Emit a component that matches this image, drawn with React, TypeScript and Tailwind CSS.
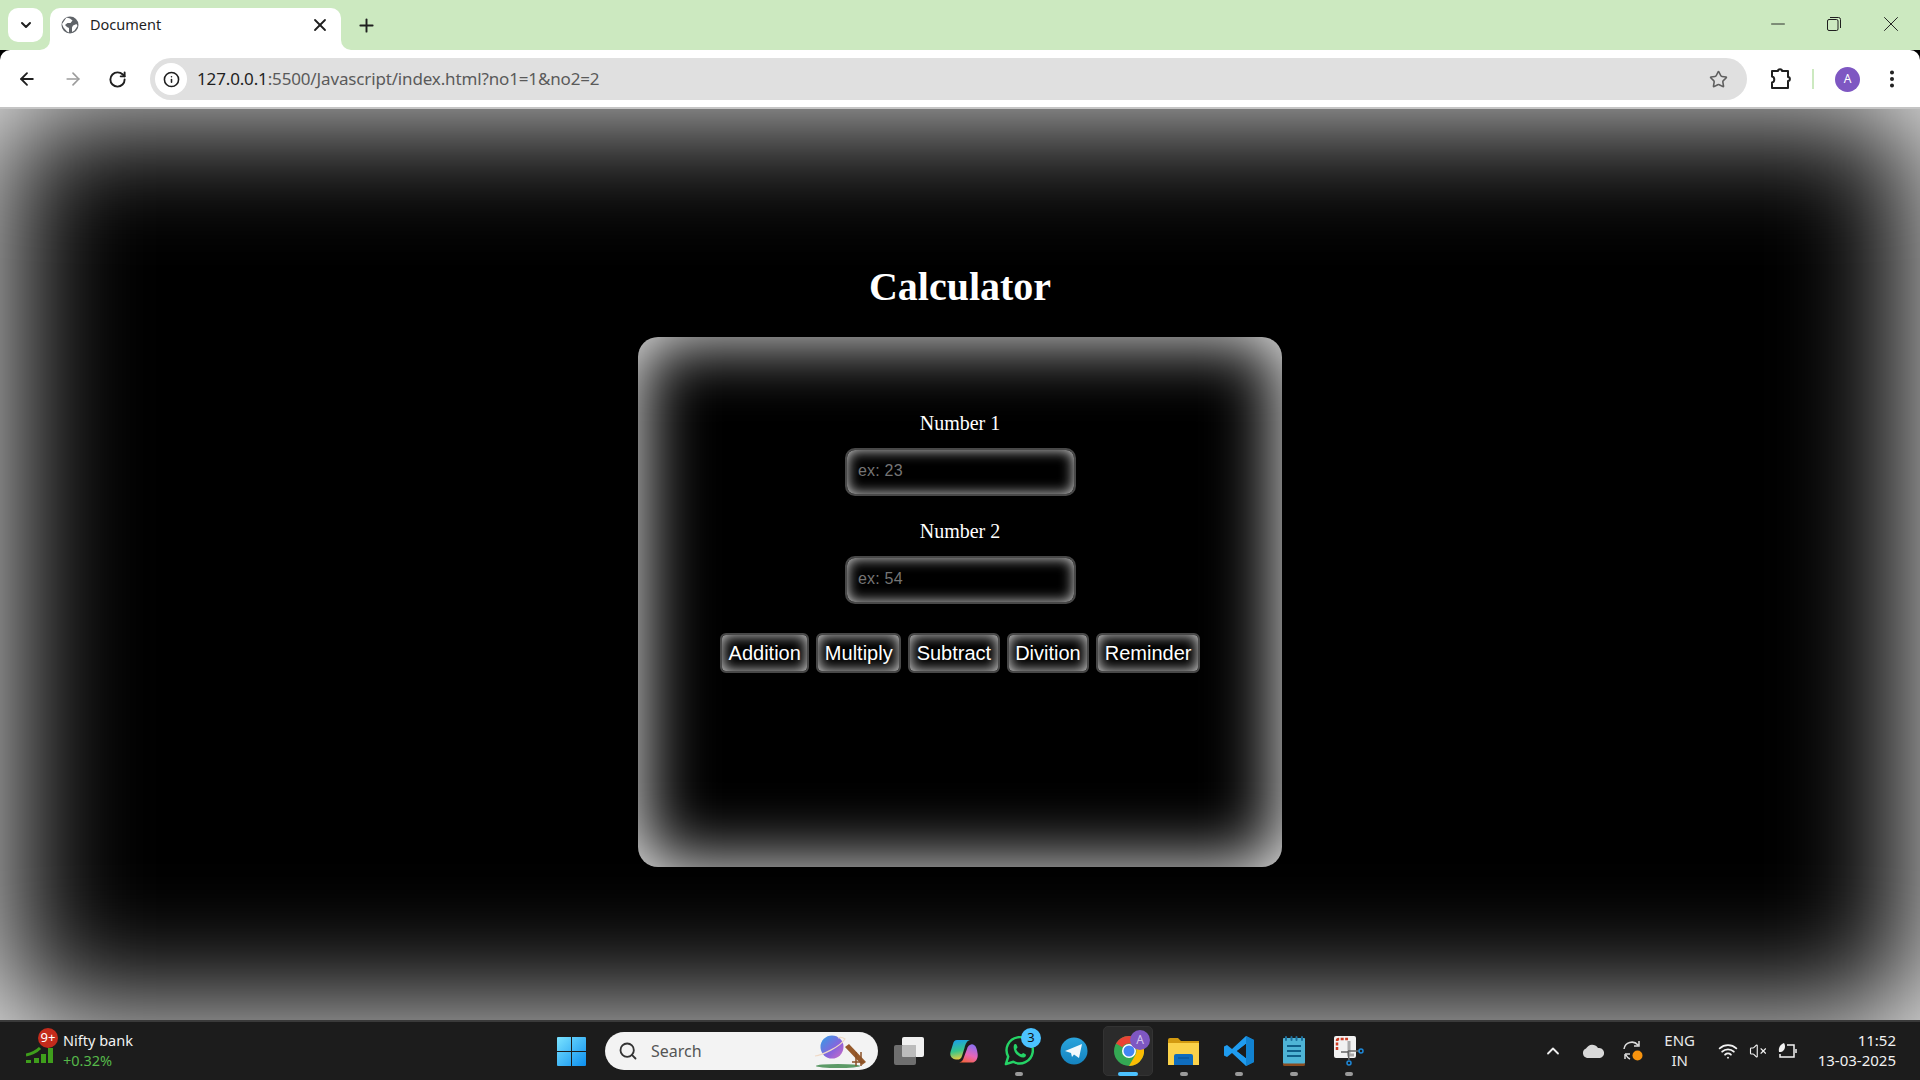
import React from "react";
import { ArrowLeft, ArrowRight, RotateCw, Info, Star, X, Plus, ChevronDown, ChevronUp, Minus, EllipsisVertical, Search, VolumeX, Wifi } from "lucide-react";

const ui = { fontFamily: '"Noto Sans", "Open Sans", sans-serif' };

function Globe() {
  return (
    <svg width="18" height="18" viewBox="0 0 18 18">
      <circle cx="9" cy="9" r="8.500" fill="#5f6368" />
      <path d="M5.500 1.500 L9 2.500 L11.500 4.500 L9.500 7 L6.500 7 L4 9 L6 11 L8 12 L8 16.500 L6 15.500 L2.500 11.500 L1 8 Z M12 9.500 L15.500 8 L16.500 10 L13.500 14.500 L11 16 L11 11.500 Z" fill="#fff" />
    </svg>
  );
}

function Puzzle() {
  return (
    <svg width="24" height="24" viewBox="0 0 24 24" fill="none" stroke="#1f1f1f" strokeWidth="2" strokeLinejoin="round">
      <path d="M3 4 H9 C9 1.500 13 1.500 13 4 H19 V10 C21.500 10 21.500 14 19 14 V21 H3 V15.500 C6 15 6 10 3 9.500 Z" />
    </svg>
  );
}

function Restore() {
  return (
    <svg width="14" height="14" viewBox="0 0 14 14" fill="none" stroke="#1f1f1f" strokeWidth="1">
      <rect x="0.500" y="2.500" width="10.500" height="11" rx="1.500" />
      <path d="M3 .5 H11.500 A2 2 0 0 1 13.500 2.500 V11" />
    </svg>
  );
}

function Windows() {
  return (
    <svg width="29" height="29" viewBox="0 0 29 29">
      <defs>
        <linearGradient id="win" x1="0" y1="0" x2="1" y2="1">
          <stop offset="0" stopColor="#7be3ff" />
          <stop offset="1" stopColor="#0c8fef" />
        </linearGradient>
      </defs>
      <path d="M1 0 H14 V14 H0 V1 A1 1 0 0 1 1 0 Z M15 0 H28 A1 1 0 0 1 29 1 V14 H15 Z M0 15 H14 V29 H1 A1 1 0 0 1 0 28 Z M15 15 H29 V28 A1 1 0 0 1 28 29 H15 Z" fill="url(#win)" />
    </svg>
  );
}

function Planet() {
  return (
    <svg width="56" height="36" viewBox="0 0 56 36">
      <defs>
        <linearGradient id="pl" x1="0" y1="0" x2="1" y2="1">
          <stop offset="0" stopColor="#2f9fe6" />
          <stop offset=".6" stopColor="#8a62dc" />
          <stop offset="1" stopColor="#d06fc4" />
        </linearGradient>
      </defs>
      <ellipse cx="26" cy="33" rx="22" ry="2" fill="#5c9a67" />
      <circle cx="20" cy="14" r="11.500" fill="url(#pl)" />
      <path d="M3 23 C10 22 28 14 33 6 C30 4 28 4 26 5" stroke="#efd9c6" strokeWidth="1.200" fill="none" />
      <path d="M33 14 L37 11 L54 29 L50 32 Z" fill="#96592a" />
      <path d="M44 19 V33 M49 19 V33 M40 29 H52" stroke="#8a5128" strokeWidth="1.500" />
    </svg>
  );
}

function TaskView() {
  return (
    <svg width="30" height="28" viewBox="0 0 30 28">
      <rect x="8" y="0" width="22" height="20" rx="2" fill="#f1f1f1" />
      <rect x="0" y="8" width="22" height="20" rx="2" fill="#6e6e6e" />
      <rect x="8" y="8" width="14" height="12" rx="1" fill="#bcbcbc" />
    </svg>
  );
}

function Copilot() {
  return (
    <svg width="28" height="25" viewBox="0 0 28 25">
      <defs>
        <linearGradient id="c1" x1="0.300" y1="0" x2="0.500" y2="1">
          <stop offset="0" stopColor="#1a9fe8" />
          <stop offset=".55" stopColor="#37c58a" />
          <stop offset="1" stopColor="#f2cb3d" />
        </linearGradient>
        <linearGradient id="c2" x1="0.700" y1="0" x2="0.300" y2="1">
          <stop offset="0" stopColor="#8a6ff0" />
          <stop offset=".55" stopColor="#e765b8" />
          <stop offset="1" stopColor="#f4633c" />
        </linearGradient>
      </defs>
      <path d="M20 6 C21 5 23 5 24 6 C26 7 27 10 27.500 14 C28.500 19 26 23.500 22 23.500 H8 C12 23.500 13 21 14 18 L17 10 C17.500 8 18.500 6.500 20 6 Z" fill="url(#c2)" />
      <path d="M7 1 H20 C16.500 2 15.500 5 14.500 9 L12 17 C11 20 9 21 6 20.500 C2 20 -.5 17 .5 13 L3 5 C3.500 2.500 5 1 7 1 Z" fill="url(#c1)" />
    </svg>
  );
}

function WhatsApp() {
  return (
    <svg width="30" height="30" viewBox="0 0 32 32" fill="none">
      <path d="M2 30 L4.500 22 A14 14 0 1 1 10 27.500 Z" stroke="#25d366" strokeWidth="2.600" strokeLinejoin="round" />
      <path d="M10.500 10 C11 8.500 13 8 13.500 9.500 L14.500 12 L13 14 C14 16.500 16 18.500 18.500 19.500 L20.500 18 L23 19.500 C24 20.500 23 23 21 23 C15 23.500 9 16 10.500 10 Z" fill="#25d366" />
    </svg>
  );
}

function Telegram() {
  return (
    <svg width="28" height="28" viewBox="0 0 28 28">
      <defs>
        <linearGradient id="tg" x1="0" y1="0" x2="0" y2="1">
          <stop offset="0" stopColor="#2aa4dc" />
          <stop offset="1" stopColor="#1583bf" />
        </linearGradient>
      </defs>
      <circle cx="14" cy="14" r="13.500" fill="url(#tg)" />
      <path d="M5 14 L22 7 L19 21 L14 17.500 L12 20 L11 16 Z" fill="#f3f9fc" />
    </svg>
  );
}

function Chrome() {
  return (
    <svg width="30" height="30" viewBox="0 0 30 30">
      <circle cx="15" cy="15" r="15" fill="#34a853" />
      <path d="M15 0 A15 15 0 0 1 28 7.500 L15 7.500 A7.500 7.500 0 0 0 8.500 11.200 L2 7.500 A15 15 0 0 1 15 0 Z" fill="#ea4335" />
      <path d="M28 7.500 A15 15 0 0 1 15 30 L21.500 18.700 A7.500 7.500 0 0 0 15 7.500 Z" fill="#fbbc04" />
      <circle cx="15" cy="15" r="7" fill="#fff" />
      <circle cx="15" cy="15" r="5.500" fill="#4285f4" />
    </svg>
  );
}

function Folder() {
  return (
    <svg width="31" height="27" viewBox="0 0 31 27">
      <path d="M0 2 A2 2 0 0 1 2 0 H10 L13 3 H31 V8 H0 Z" fill="#d39a10" />
      <path d="M0 5 H31 V27 H0 Z" fill="#fbd24a" />
      <path d="M6 18 A2 2 0 0 1 8 16 H23 A2 2 0 0 1 25 18 V27 H6 Z" fill="#0f6cbd" />
      <path d="M10 20 H21" stroke="#0a4f8c" strokeWidth="1" />
    </svg>
  );
}

function VSCode() {
  return (
    <svg width="30" height="30" viewBox="0 0 30 30">
      <path d="M22 0 L30 4 V26 L22 30 L8 17 L3 21 L0 19.500 V10.500 L3 9 L8 13 Z M22 8 L13 15 L22 22 Z" fill="#1f9cf0" />
      <path d="M22 0 L30 4 V26 L22 30 Z" fill="#0f7fcd" fillOpacity=".9" />
      <path d="M22 8 L13 15 L22 22 Z" fill="#1c1c1c" />
    </svg>
  );
}

function Notepad() {
  return (
    <svg width="22" height="30" viewBox="0 0 22 30">
      <rect x="0" y="2" width="22" height="28" rx="1.500" fill="#8a4b1f" />
      <rect x="0" y="2" width="22" height="25.500" rx="1" fill="#4eb4d6" />
      <path d="M4 10 H18 M4 15 H18 M4 20 H18" stroke="#0f5f8a" strokeWidth="2" />
      <path d="M3 1 V4 M8.500 1 V4 M13.500 1 V4 M19 1 V4" stroke="#1c6f9c" strokeWidth="2" strokeLinecap="round" />
    </svg>
  );
}

function Snip() {
  return (
    <svg width="30" height="30" viewBox="0 0 30 30" fill="none">
      <rect x="0" y="0" width="22" height="22" rx="2" fill="#f1f1f1" />
      <path d="M3 14 V5 A2 2 0 0 1 5 3 H14" stroke="#cc3a22" strokeWidth="2.500" strokeDasharray="3 1.500" />
      <path d="M15 5 V19 H20" stroke="#aaa" strokeWidth="3" />
      <path d="M7 16 H15 M14 15 L26 15 M14 15 L15 24" stroke="#666" strokeWidth="1.500" />
      <circle cx="27" cy="15" r="2" stroke="#1e88d8" strokeWidth="1.500" />
      <circle cx="15" cy="27" r="2" stroke="#1e88d8" strokeWidth="1.500" />
    </svg>
  );
}

function Slot({ children, dot, badge }: { children: React.ReactNode; dot?: boolean; badge?: React.ReactNode }) {
  return (
    <div className="relative flex h-[50px] w-[55px] items-center justify-center">
      {children}
      {badge}
      {dot && <div className="absolute bottom-0 h-[4px] w-[8px] rounded-full bg-[#9a9a9a]" />}
    </div>
  );
}

function Field({ label, placeholder }: { label: string; placeholder: string }) {
  return (
    <div className="flex flex-col items-center">
      <label className="text-[20px] leading-[23px] text-white">{label}</label>
      <input
        placeholder={placeholder}
        className="mt-[13px] h-[48px] w-[231px] rounded-[10px] border-2 border-[#484848] bg-black px-[11.500px] pb-[2px] text-[16px] tracking-[0.2px] text-white outline-none shadow-[inset_0_0_14px_#ddd] placeholder:text-[#757575]"
        style={{ fontFamily: '"Liberation Sans", sans-serif' }}
      />
    </div>
  );
}

function CalcButton({ children }: { children: React.ReactNode }) {
  return (
    <button className="h-[40px] rounded-[6px] border-2 border-[#484848] bg-black px-[6.500px] pb-px text-[20px] text-white shadow-[inset_0_0_14px_#ddd]">
      {children}
    </button>
  );
}

export default function App() {
  return (
    <div className="flex h-screen w-full flex-col overflow-hidden bg-black" style={ui}>
      <div className="h-[50px] shrink-0 bg-[#cce9c0] pl-[8px] pt-[8px]">
        <div className="flex items-start">
          <div className="flex h-[34px] w-[35px] items-center justify-center rounded-[10px] bg-white">
            <ChevronDown size={16} strokeWidth={3} color="#1f1f1f" />
          </div>
          <div className="relative ml-[7px] flex h-[42px] w-[291px] items-center rounded-t-[10px] bg-white pb-[8px] pl-[11px] pr-[11px]">
            <div className="absolute bottom-0 left-[-10px] h-[10px] w-[10px] bg-white">
              <div className="h-full w-full rounded-br-[10px] bg-[#cce9c0]" />
            </div>
            <div className="absolute bottom-0 right-[-10px] h-[10px] w-[10px] bg-white">
              <div className="h-full w-full rounded-bl-[10px] bg-[#cce9c0]" />
            </div>
            <Globe />
            <span className="ml-[11px] text-[14.500px] text-[#1f1f1f]">Document</span>
            <X size={20} strokeWidth={2.200} color="#1f1f1f" className="ml-auto" />
          </div>
          <div className="ml-[8px] flex h-[34px] w-[34px] items-center justify-center">
            <Plus size={21} strokeWidth={2.200} color="#1f1f1f" />
          </div>
          <div className="ml-auto flex h-[34px] items-center pb-[2px]">
            <div className="flex w-[56px] justify-center"><Minus size={22} strokeWidth={1} color="#1f1f1f" /></div>
            <div className="flex w-[56px] justify-center"><Restore /></div>
            <div className="flex w-[58px] justify-center"><X size={26} strokeWidth={0.900} color="#1f1f1f" /></div>
          </div>
        </div>
      </div>

      <div className="flex h-[59px] shrink-0 items-center rounded-t-[10px] border-b-2 border-[#c4c4c4] bg-white pl-[17px] pr-[17px] pt-[1px]">
        <ArrowLeft size={20} strokeWidth={2.200} color="#1f1f1f" />
        <ArrowRight size={20} strokeWidth={2} color="#9c9c9c" className="ml-[26px]" />
        <RotateCw size={19} strokeWidth={2.400} color="#1f1f1f" className="ml-[25px]" />
        <div className="ml-[23px] flex h-[42px] flex-1 items-center rounded-full bg-[#e0e0e0] pl-[5px] pr-[19px]">
          <div className="flex h-[32px] w-[32px] items-center justify-center rounded-full bg-white">
            <Info size={17} strokeWidth={2.200} color="#1f1f1f" />
          </div>
          <span className="ml-[10px] text-[17px] tracking-[-0.15px] text-[#5a5a5a]"><span className="text-[#1f1f1f]">127.0.0.1</span>:5500/Javascript/index.html?no1=1&amp;no2=2</span>
          <Star size={19} strokeWidth={2} color="#5f5f5f" className="ml-auto" />
        </div>
        <div className="ml-[20px] flex w-[28px] justify-center"><Puzzle /></div>
        <div className="ml-[17px] h-[20px] w-[2px] bg-[#cce9c0]" />
        <div className="ml-[21px] flex h-[25px] w-[25px] items-center justify-center rounded-full bg-[#7e57c2] text-[12px] text-white">A</div>
        <EllipsisVertical size={22} strokeWidth={2.400} color="#1f1f1f" className="ml-[21px]" />
      </div>

      <main
        className="flex min-h-0 flex-1 flex-col items-center bg-black pt-[155px] shadow-[inset_0_0_130px_#fff]"
        style={{ fontFamily: '"Liberation Serif", serif' }}
      >
        <h1 className="text-[40px] leading-[46px] font-bold text-white">Calculator</h1>
        <div className="mt-[27px] flex h-[530px] w-[644px] flex-col items-center rounded-[20px] bg-black pt-[75px] shadow-[inset_0_0_70px_#fff]">
          <Field label="Number 1" placeholder="ex: 23" />
          <div className="mt-[24px]"><Field label="Number 2" placeholder="ex: 54" /></div>
          <div className="mt-[29px] flex gap-[7px]" style={{ fontFamily: '"Liberation Sans", sans-serif' }}>
            <CalcButton>Addition</CalcButton>
            <CalcButton>Multiply</CalcButton>
            <CalcButton>Subtract</CalcButton>
            <CalcButton>Divition</CalcButton>
            <CalcButton>Reminder</CalcButton>
          </div>
        </div>
      </main>

      <footer className="flex h-[60px] shrink-0 items-center border-t-2 border-[#3a3a3a] bg-[#1c1c1c]">
        <div className="relative ml-[26px] flex w-[531px] items-center pb-[3px]">
          <svg width="27" height="16" viewBox="0 0 27 16" className="mt-[10px]">
            <path d="M0 8 C5 7 10 5 14 1" stroke="#3f9e1c" strokeWidth="3" fill="none" />
            <rect x="0" y="13" width="5" height="3" fill="#3f9e1c" />
            <rect x="8" y="11" width="5" height="5" fill="#3f9e1c" />
            <rect x="15" y="7" width="5" height="9" fill="#3f9e1c" />
            <rect x="22" y="1" width="5" height="15" fill="#3f9e1c" />
          </svg>
          <div className="absolute left-[12px] top-[-2px] flex h-[20px] w-[20px] items-center justify-center rounded-full bg-[#c42b1c] text-[13px] text-white">9+</div>
          <div className="ml-[10px] flex flex-col leading-[20px]">
            <span className="text-[14.500px] text-[#f2f2f2]">Nifty bank</span>
            <span className="text-[14.500px] text-[#56b84a]">+0.32%</span>
          </div>
        </div>
        <Windows />
        <div className="ml-[19px] flex h-[38px] w-[273px] items-center rounded-full bg-[#f3f3f3] pl-[13px] pr-[10px]">
          <Search size={20} strokeWidth={2.200} color="#333" />
          <span className="ml-[13px] text-[16px] text-[#555]">Search</span>
          <span className="ml-auto flex"><Planet /></span>
        </div>
        <div className="ml-[3px] flex items-center">
          <Slot><TaskView /></Slot>
          <Slot><Copilot /></Slot>
          <Slot dot badge={<div className="absolute right-[5px] top-[2px] flex h-[20px] w-[20px] items-center justify-center rounded-full bg-[#4cc2ff] text-[13px] text-[#111]">3</div>}><WhatsApp /></Slot>
          <Slot><Telegram /></Slot>
          <div className="relative flex h-[50px] w-[55px] items-center justify-center">
            <div className="absolute left-[2px] top-0 h-[50px] w-[50px] rounded-[5px] border border-[#333] bg-[#2b2b2b]" />
            <div className="relative"><Chrome /></div>
            <div className="absolute right-[6px] top-[4px] flex h-[20px] w-[20px] items-center justify-center rounded-full bg-[#7e57c2] text-[12px] text-[#d4c6ee]">A</div>
            <div className="absolute bottom-0 left-[17px] h-[4px] w-[20px] rounded-full bg-[#4cc2ff]" />
          </div>
          <Slot dot><Folder /></Slot>
          <Slot dot><VSCode /></Slot>
          <Slot dot><Notepad /></Slot>
          <Slot dot><Snip /></Slot>
        </div>
        <div className="ml-auto flex items-center pr-[24px] text-white">
          <ChevronUp size={20} strokeWidth={2.200} color="#eee" />
          <svg width="22" height="14" viewBox="0 0 22 14" className="ml-[19px]">
            <path d="M5 14 A5 5 0 0 1 4 4.500 A7 7 0 0 1 16 4 A5 5 0 0 1 18 14 Z" fill="#d8d8d8" />
          </svg>
          <svg width="22" height="22" viewBox="0 0 22 22" fill="none" stroke="#ddd" strokeWidth="1.500" className="ml-[18px]">
            <path d="M2 9 A8 8 0 0 1 16 5 M17 1 V6 H12 M3 14 H8 M3 14 V19 M4 15 A8 8 0 0 0 8 19" />
            <circle cx="15.500" cy="15.500" r="5" fill="#f7930e" stroke="none" />
          </svg>
          <div className="ml-[19px] flex w-[34px] flex-col items-center pb-[2px] text-[15px] leading-[20px] text-[#e8e8e8]">
            <span>ENG</span>
            <span>IN</span>
          </div>
          <Wifi size={20} strokeWidth={2.200} color="#f2f2f2" className="ml-[21px]" />
          <VolumeX size={18} strokeWidth={1.500} color="#f2f2f2" className="ml-[11px]" />
          <svg width="20" height="18" viewBox="0 0 20 18" fill="none" stroke="#f2f2f2" strokeWidth="1.500" className="ml-[11px]">
            <path d="M9 3 H16 V15 H2 V12 M18 7 V11" />
            <path d="M1 10 C0 5 3 2 6 1 C8 4 7 9 3 10 Z" fill="#f2f2f2" stroke="none" />
          </svg>
          <div className="ml-[20px] flex flex-col items-end pb-[3px] text-[15px] leading-[20px] text-[#f2f2f2]">
            <span>11:52</span>
            <span>13-03-2025</span>
          </div>
        </div>
      </footer>
    </div>
  );
}
